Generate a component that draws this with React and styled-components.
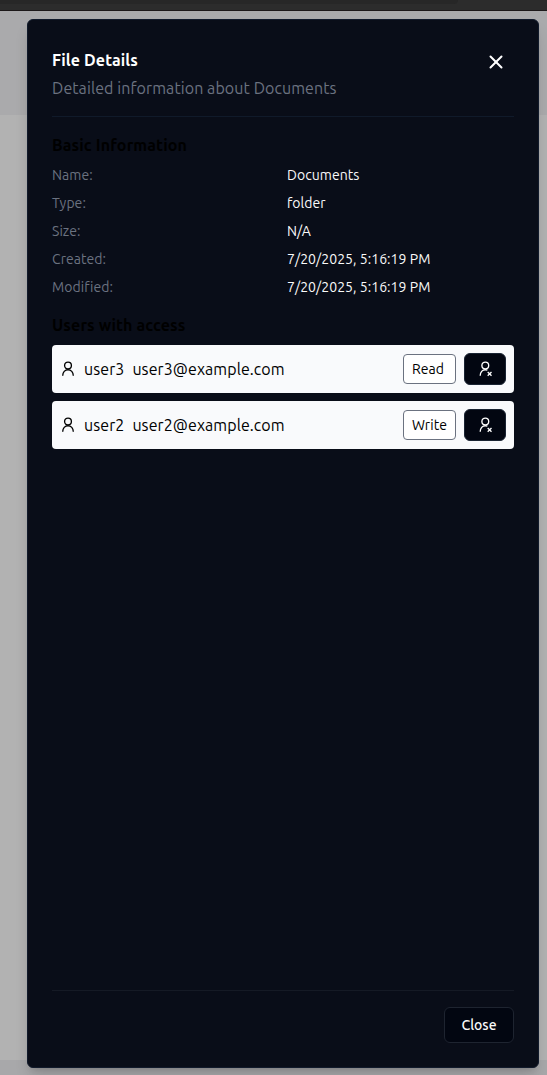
import React from "react";
import styled, { createGlobalStyle } from "styled-components";
import { X } from "lucide-react";

const GlobalStyle = createGlobalStyle`
  *, *::before, *::after { box-sizing: border-box; }
  body {
    margin: 0;
    font-family: Ubuntu, "Noto Sans", sans-serif;
    font-size: 16px;
    line-height: 24px;
    letter-spacing: 0.08px;
    color: #000;
  }
  h2, h3, p, dl, dt, dd, ul { margin: 0; padding: 0; }
`;

const Page = styled.div`
  position: relative;
  display: flex;
  flex-direction: column;
  height: 1075px;
  overflow: hidden;
  background: #b2b2b2;
`;

const BrowserBar = styled.div`
  flex: none;
  height: 11px;
  background: #2c2c2c;
  border-bottom: 1px solid #1c1819;
`;

const AddressField = styled.div`
  width: 458px;
  height: 4px;
  background: #272727;
  border-bottom-right-radius: 5px;
`;

const PageHeader = styled.div`
  flex: none;
  height: 104px;
  background: #aaaaac;
`;

const PageBody = styled.div`
  flex: 1;
`;

const PageFooter = styled.div`
  flex: none;
  height: 15px;
  background: #a8a8aa;
`;

const Dialog = styled.section`
  position: absolute;
  top: 19px;
  right: 8px;
  bottom: 7px;
  width: 512px;
  display: flex;
  flex-direction: column;
  padding: 24px;
  background: #090d18;
  border: 1px solid #111a2b;
  border-radius: 6px;
  box-shadow: 0 10px 15px -3px rgba(0, 0, 0, 0.16), 0 4px 6px -4px rgba(0, 0, 0, 0.16);
`;

const Header = styled.header`
  display: flex;
  justify-content: space-between;
  padding: 4px 0 16px;
  border-bottom: 1px solid #101a2a;
`;

const Titles = styled.div`
  display: grid;
  gap: 4px;
`;

const Title = styled.h2`
  font-size: 16px;
  font-weight: 700;
  letter-spacing: 0.14px;
  color: #fff;
`;

const Subtitle = styled.p`
  color: #6b7280;
`;

const IconButton = styled.button`
  display: grid;
  place-items: center;
  width: 36px;
  height: 36px;
  margin-top: -4px;
  padding: 0;
  border: 0;
  background: none;
  color: #fff;
`;

const Content = styled.div`
  flex: 1;
  padding-top: 16px;
`;

const SectionTitle = styled.h3`
  font-size: 16px;
  font-weight: 700;
  line-height: 24px;
  letter-spacing: 0.14px;
  color: #000;
  margin-bottom: 8px;
`;

const Details = styled.dl`
  display: grid;
  grid-template-columns: 1fr 1fr;
  gap: 8px;
  margin-bottom: 16px;
  font-size: 14px;
  line-height: 20px;
  letter-spacing: 0.05px;
`;

const Term = styled.dt`
  color: #6b7280;
`;

const Value = styled.dd`
  color: #fafafa;
`;

const UserList = styled.ul`
  display: grid;
  gap: 8px;
  list-style: none;
`;

const UserRow = styled.li`
  display: flex;
  align-items: center;
  gap: 8px;
  height: 48px;
  padding: 8px;
  border-radius: 4px;
  background: #f9fafc;
`;

const Spacer = styled.span`
  flex: 1;
`;

const Permission = styled.span`
  width: 53px;
  height: 30px;
  padding: 0 8px;
  border: 1px solid #6b7280;
  border-radius: 4px;
  background: #fff;
  font-size: 14px;
  line-height: 28px;
`;

const RemoveButton = styled.button`
  display: grid;
  place-items: center;
  width: 42px;
  height: 32px;
  padding: 0;
  border: 1px solid #1a2433;
  border-radius: 6px;
  background: #020611;
  color: #fff;
`;

const Footer = styled.footer`
  display: flex;
  justify-content: flex-end;
  padding-top: 16px;
  border-top: 1px solid #151a25;
`;

const CloseButton = styled.button`
  width: 70px;
  height: 36px;
  padding: 0;
  border: 1px solid #1e2430;
  border-radius: 6px;
  background: #020611;
  color: #fafafa;
  font-family: inherit;
  font-size: 14px;
  font-weight: 500;
  line-height: 20px;
`;

const Glyph = styled.svg`
  flex: none;
  width: 16px;
  height: 16px;
  fill: none;
  stroke: currentColor;
  stroke-width: 1.35;
`;

function PersonIcon() {
  return (
    <Glyph viewBox="0 0 16 16">
      <circle cx="8" cy="4.5" r="3.4" />
      <path d="M2.7 14.7c0-3.4 2.3-6 5.3-6s5.3 2.6 5.3 6" />
    </Glyph>
  );
}

function PersonRemoveIcon() {
  return (
    <Glyph viewBox="0 0 16 16">
      <circle cx="8.3" cy="4.5" r="3.4" />
      <path d="M3.2 14.7c0-3.4 2.2-6 5.1-6 .8 0 1.5.2 2.1.5" />
      <path d="m10.7 10.9 3.8 3.8m0-3.8-3.8 3.8" />
    </Glyph>
  );
}

const details = [
  ["Name:", "Documents"],
  ["Type:", "folder"],
  ["Size:", "N/A"],
  ["Created:", "7/20/2025, 5:16:19 PM"],
  ["Modified:", "7/20/2025, 5:16:19 PM"],
];

const users = [
  { name: "user3", email: "user3@example.com", access: "Read" },
  { name: "user2", email: "user2@example.com", access: "Write" },
];

export default function App() {
  return (
    <Page>
      <GlobalStyle />
      <BrowserBar>
        <AddressField />
      </BrowserBar>
      <PageHeader />
      <PageBody />
      <PageFooter />
      <Dialog role="dialog">
        <Header>
          <Titles>
            <Title>File Details</Title>
            <Subtitle>Detailed information about Documents</Subtitle>
          </Titles>
          <IconButton aria-label="Close details">
            <X size={22} strokeWidth={2.2} />
          </IconButton>
        </Header>
        <Content>
          <SectionTitle>Basic Information</SectionTitle>
          <Details>
            {details.map(([term, value]) => (
              <React.Fragment key={term}>
                <Term>{term}</Term>
                <Value>{value}</Value>
              </React.Fragment>
            ))}
          </Details>
          <SectionTitle>Users with access</SectionTitle>
          <UserList>
            {users.map((user) => (
              <UserRow key={user.name}>
                <PersonIcon />
                <span>{user.name}</span>
                <span>{user.email}</span>
                <Spacer />
                <Permission>{user.access}</Permission>
                <RemoveButton aria-label={`Remove ${user.name}`}>
                  <PersonRemoveIcon />
                </RemoveButton>
              </UserRow>
            ))}
          </UserList>
        </Content>
        <Footer>
          <CloseButton>Close</CloseButton>
        </Footer>
      </Dialog>
    </Page>
  );
}
